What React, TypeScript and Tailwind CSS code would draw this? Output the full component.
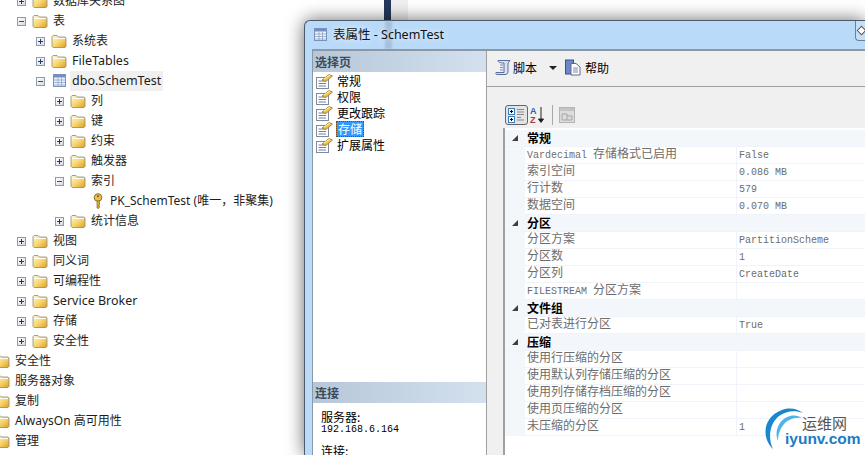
const sansFont = "font-['Noto_Sans','Noto_Sans_CJK_SC',sans-serif]"
const cjkFont = "font-['Noto_Sans_CJK_SC',sans-serif]"
const gridFont = "font-['Liberation_Mono','Noto_Sans_CJK_SC',monospace]"

const indents = ["-ml-[21px]", "ml-[17px]", "ml-[36px]", "ml-[55px]", "ml-[74px]"]

type TreeRow = { label: string; level: number; open?: boolean; icon?: "folder" | "table" | "key" }

const treeRows: TreeRow[] = [
	{ label: "数据库关系图", level: 1 },
	{ label: "表", level: 1, open: true },
	{ label: "系统表", level: 2 },
	{ label: "FileTables", level: 2 },
	{ label: "dbo.SchemTest", level: 2, open: true, icon: "table" },
	{ label: "列", level: 3 },
	{ label: "键", level: 3 },
	{ label: "约束", level: 3 },
	{ label: "触发器", level: 3 },
	{ label: "索引", level: 3, open: true },
	{ label: "PK_SchemTest (唯一，非聚集)", level: 4, icon: "key" },
	{ label: "统计信息", level: 3 },
	{ label: "视图", level: 1 },
	{ label: "同义词", level: 1 },
	{ label: "可编程性", level: 1 },
	{ label: "Service Broker", level: 1 },
	{ label: "存储", level: 1 },
	{ label: "安全性", level: 1 },
	{ label: "安全性", level: 0 },
	{ label: "服务器对象", level: 0 },
	{ label: "复制", level: 0 },
	{ label: "AlwaysOn 高可用性", level: 0 },
	{ label: "管理", level: 0 },
]

type GridRow = { label: string; value?: string; header?: boolean }

const gridRows: GridRow[] = [
	{ label: "常规", header: true },
	{ label: "Vardecimal 存储格式已启用", value: "False" },
	{ label: "索引空间", value: "0.086 MB" },
	{ label: "行计数", value: "579" },
	{ label: "数据空间", value: "0.070 MB" },
	{ label: "分区", header: true },
	{ label: "分区方案", value: "PartitionScheme" },
	{ label: "分区数", value: "1" },
	{ label: "分区列", value: "CreateDate" },
	{ label: "FILESTREAM 分区方案" },
	{ label: "文件组", header: true },
	{ label: "已对表进行分区", value: "True" },
	{ label: "压缩", header: true },
	{ label: "使用行压缩的分区" },
	{ label: "使用默认列存储压缩的分区" },
	{ label: "使用列存储存档压缩的分区" },
	{ label: "使用页压缩的分区" },
	{ label: "未压缩的分区", value: "1" },
]

const pages = ["常规", "权限", "更改跟踪", "存储", "扩展属性"]

function Folder() {
	return (
		<svg width="16" height="14" viewBox="0 0 16 14" className="shrink-0">
			<defs>
				<linearGradient id="fold" x1="0" y1="0" x2="1" y2="1">
					<stop offset="0" stopColor="#fff8d0" />
					<stop offset="0.5" stopColor="#f9d873" />
					<stop offset="1" stopColor="#dc9f24" />
				</linearGradient>
			</defs>
			<path d="M1 12.5V2.5L2 1.5H6L7.5 3H14L15 4V12.5L14 13.5H2Z" fill="url(#fold)" stroke="#8d8a78" strokeWidth="0.8" />
			<path d="M2 4.5H14" stroke="#fffdf2" />
		</svg>
	)
}

function Expander({ open }: { open?: boolean }) {
	return (
		<span className="relative block h-[9px] w-[9px] shrink-0 border border-[#8f9bab] bg-gradient-to-br from-white to-[#d5dbe5]">
			<span className={open ? "absolute left-px top-[3px] h-px w-[5px] bg-[#4a4a4a]" : "absolute left-px top-[3px] h-px w-[5px] bg-[#24367a]"} />
			{!open && <span className="absolute left-[3px] top-px h-[5px] w-px bg-[#24367a]" />}
		</span>
	)
}

function TableIcon() {
	return (
		<svg width="14" height="14" viewBox="0 0 14 14" className="shrink-0">
			<rect x="0.5" y="0.5" width="12" height="12" fill="#eef3fb" stroke="#7d90b8" />
			<rect x="1" y="1" width="11" height="2.5" fill="#6f8fc9" />
			<path d="M1 6H12M1 8.5H12M1 11H12M5 4V12M8.5 4V12" stroke="#8ba2cc" strokeWidth="0.8" />
		</svg>
	)
}

function KeyIcon() {
	return (
		<svg width="12" height="16" viewBox="0 0 12 16" className="shrink-0">
			<circle cx="6" cy="4.5" r="3.8" fill="#eac24f" stroke="#8d6d1c" />
			<circle cx="6" cy="3.2" r="1" fill="#6b5210" />
			<path d="M5 8V15L6.5 15.5L7.5 14V13H6.5V12H7.5V8Z" fill="#dcae3a" stroke="#8d6d1c" strokeWidth="0.7" />
		</svg>
	)
}

function PageIcon() {
	return (
		<svg width="17" height="15" viewBox="0 0 17 15" className="shrink-0">
			<rect x="0.5" y="3.5" width="12" height="11" fill="#fff" stroke="#7f8aa0" />
			<path d="M2.5 7H10M2.5 9.5H10M2.5 12H10" stroke="#6c7fb5" />
			<path d="M6 6L13 0.5L16.5 2L10 7.5Z" fill="#f0c24c" stroke="#8a6a20" strokeWidth="0.7" />
			<path d="M8 5L14 1" stroke="#fff2b8" />
		</svg>
	)
}

function ScrollIcon() {
	return (
		<svg width="16" height="17" viewBox="0 0 16 17">
			<path d="M3 1.5H15L13 4V12.5C13 14.5 12 15.5 10 15.5H2C1 15.5 0.5 14.5 1 13.5H9V4C7 4 3 4 3 1.5Z" fill="#d7e2f4" stroke="#5b6e9b" />
			<path d="M5 6H8M5 8.5H8M5 11H8" stroke="#7f8fb5" />
		</svg>
	)
}

function HelpIcon() {
	return (
		<svg width="16" height="17" viewBox="0 0 16 17">
			<rect x="0.5" y="1" width="8" height="14" fill="#6f86c9" stroke="#3d4f8c" />
			<path d="M6 4.5H11L15 8V16H6Z" fill="#fff" stroke="#5a6a8f" />
			<path d="M8 9H13M8 11H13M8 13H13" stroke="#7a8aa8" />
		</svg>
	)
}

function Tree() {
	return (
		<div className={`-mt-[9px] ${sansFont} text-[#1d1d1d]`}>
			{treeRows.map((row, i) => (
				<div key={i} className={`flex h-5 items-center ${indents[row.level]}`}>
					<span className="flex w-[15px] shrink-0 items-center">
						{row.level > 0 && row.level < 4 && <Expander open={row.open} />}
					</span>
					<span className="flex w-[21px] shrink-0 items-center">
						{row.icon === "table" ? (
							<span className="ml-[2px]"><TableIcon /></span>
						) : row.icon === "key" ? (
							<span className="ml-[3px]"><KeyIcon /></span>
						) : (
							<Folder />
						)}
					</span>
					<span
						className={
							row.icon === "table"
								? "-ml-[2px] flex h-5 items-center whitespace-nowrap bg-[#f0f0f0] px-[2px] text-[12.5px]"
								: /[\u4e00-\u9fff]/.test(row.label)
									? "whitespace-nowrap text-[12px]"
									: "whitespace-nowrap text-[12.5px]"
						}
					>
						{row.label}
					</span>
				</div>
			))}
		</div>
	)
}

function PropertyGrid() {
	return (
		<div className={`ml-4 flex-1 border-l-2 border-l-[#a0a0a0] bg-white pt-[2px] ${cjkFont} text-[12px]`}>
			{gridRows.map((row, i) =>
				row.header ? (
					<div key={i} className="flex h-[17px] items-center border-b border-[#f0f3f9] bg-[#f3f6fb]">
						<span className="ml-[7px] h-0 w-0 border-b-[6px] border-l-[6px] border-b-[#404040] border-l-transparent" />
						<span className="ml-[9px] font-bold text-black">{row.label}</span>
					</div>
				) : (
					<div key={i} className="flex h-[17px] items-center bg-[#f3f6fb]">
						<div className="flex h-full items-center">
							<div className="w-5" />
						</div>
						<div className={`flex h-full w-[212px] items-center whitespace-nowrap border-b border-r border-[#f0f3f9] bg-white pl-[2px] ${gridFont} text-[#6d6d6d]`}>
							{row.label.includes("Vardecimal") || row.label.includes("FILESTREAM") ? (
								<span className="text-[10px]">
									{row.label.split(" ")[0]} <span className="text-[12px]">{row.label.split(" ")[1]}</span>
								</span>
							) : (
								row.label
							)}
						</div>
						<div className={`flex h-full flex-1 items-center border-b border-[#f0f3f9] bg-white pl-[2px] ${gridFont} text-[10px] text-[#6d6d6d]`}>
							{row.value}
						</div>
					</div>
				),
			)}
		</div>
	)
}

function Dialog() {
	return (
		<div className="absolute left-[304px] top-5 flex h-[435px] w-[561px] flex-col rounded-tl-md border-l border-t border-[#4c5a6a] bg-[#b9daf9] shadow-[0_0_18px_rgba(0,0,0,0.6)]">
			{/* title bar */}
			<div className="relative flex h-7 shrink-0 items-center pl-[9px]">
				<span className="absolute left-[80px] top-0 h-full w-[7px] bg-[#8fa6c0]/50 blur-[1px]" />
				<TableIcon />
				<span className={`relative ml-[5px] ${sansFont} text-[12.5px] text-[#111] [text-shadow:0_0_6px_white]`}>表属性 - SchemTest</span>
				<span className="absolute right-0 top-0 flex h-5 w-[10px] items-center rounded-bl-sm border-b border-l border-[#6d7f92] bg-[#c5dff8] pl-[2px]">
					<span className="block h-[7px] w-[7px] rotate-45 border border-[#555] bg-white" />
				</span>
			</div>

			<div className="ml-[7px] flex min-h-0 flex-1 border-l border-t-2 border-[#8d98a5] bg-[#f0f0f0]">
				{/* left column */}
				<div className="flex w-[174px] shrink-0 flex-col border-r border-[#a0a0a0] bg-white">
					<div className={`flex h-[21px] shrink-0 items-center bg-gradient-to-r from-[#b7c7d8] to-[#d3e1ef] pl-[2px] ${cjkFont} text-[12px] font-bold text-[#3c4a5a]`}>
						选择页
					</div>
					<div className={`flex-1 pl-[3px] pt-[1px] ${cjkFont} text-[12px] text-black`}>
						{pages.map((page) => (
							<div key={page} className="flex h-4 items-center">
								<PageIcon />
								<span
									className={
										page === "存储"
											? "ml-[3px] border border-dotted border-[#7a4a10] bg-[#3399ff] px-px leading-[14px] text-white"
											: "ml-[4px]"
									}
								>
									{page}
								</span>
							</div>
						))}
					</div>
					<div className={`flex h-[21px] shrink-0 items-center bg-gradient-to-r from-[#b7c7d8] to-[#d3e1ef] pl-[2px] ${cjkFont} text-[12px] font-bold text-[#3c4a5a]`}>
						连接
					</div>
					<div className={`h-[52px] shrink-0 overflow-hidden pl-2 pt-[7px] ${cjkFont} text-[12px] leading-[13px] text-black`}>
						<div>服务器:</div>
						<div className={`${gridFont} text-[10px]`}>192.168.6.164</div>
						<div className="mt-[8px]">连接:</div>
					</div>
				</div>

				{/* right column */}
				<div className="flex min-w-0 flex-1 flex-col">
					<div className={`flex h-[36px] shrink-0 items-center border-b border-[#a0a0a0] pb-[2px] pl-2 ${cjkFont} text-[12px] text-black`}>
						<ScrollIcon />
						<span className="ml-[2px]">脚本</span>
						<span className="ml-3 h-0 w-0 border-x-[4px] border-t-[4px] border-x-transparent border-t-[#222]" />
						<span className="ml-2"><HelpIcon /></span>
						<span className="ml-1">帮助</span>
					</div>

					<div className="ml-[18px] mt-[17px] flex h-[22px] shrink-0 items-center">
						<span className="flex h-5 w-[23px] items-center justify-center rounded-[3px] border border-[#666] bg-[#e4e4e4]">
							<svg width="17" height="15" viewBox="0 0 17 15">
								<rect x="0.5" y="0.5" width="6" height="6" fill="#fff" stroke="#3f7cc4" />
								<rect x="0.5" y="8.5" width="6" height="6" fill="#fff" stroke="#3f7cc4" />
								<path d="M2 3.5H5M3.5 2V5M2 11.5H5M3.5 10V13" stroke="#000" />
								<path d="M9 1.5H16M9 4H16M9 6.5H16M9 9.5H13M9 12H16" stroke="#8a8a8a" />
							</svg>
						</span>
						<svg width="15" height="18" viewBox="0 0 15 18" className="ml-[2px]">
							<text x="0" y="8" fontSize="9" fontWeight="bold" fill="#2f5fb0" fontFamily="Liberation Sans">A</text>
							<text x="0" y="17" fontSize="9" fontWeight="bold" fill="#a83a3a" fontFamily="Liberation Sans">Z</text>
							<path d="M11 1V15M8.5 13L11 16.5L13.5 13Z" stroke="#222" fill="#222" />
						</svg>
						<span className="ml-[7px] h-5 w-px bg-[#a8a8a8]" />
						<svg width="16" height="16" viewBox="0 0 16 16" className="ml-[6px]">
							<rect x="0.5" y="0.5" width="15" height="15" fill="#dcdcdc" stroke="#b4b4b4" />
							<rect x="1" y="1" width="14" height="3" fill="#c4c4c4" />
							<path d="M3 7H8V13H3ZM8 9H13V13H8" fill="none" stroke="#a6a6a6" />
						</svg>
					</div>

					<div className="flex min-h-0 flex-1 flex-col pt-[2px]">
						<PropertyGrid />
					</div>
				</div>
			</div>
		</div>
	)
}

function Watermark() {
	return (
		<div className="absolute left-[762px] top-[407px] h-[45px] w-[100px]">
			<svg width="44" height="44" viewBox="0 0 44 44" className="absolute left-0 top-0">
				<path d="M11 42C-1 30 1 10 20 3C28 0 36 2 41 6C33 3 24 4 17 9C7 17 6 32 11 42Z" fill="#1a86cf" />
				<path d="M16 34C12 24 17 12 28 9C33 8 37 9 40 11C33 10 27 12 23 16C18 21 16 28 16 34Z" fill="#4db4e8" />
			</svg>
			<span className={`absolute left-[40px] top-2 ${cjkFont} text-[15px] leading-4 text-[#555]`}>运维网</span>
			<span className="absolute left-[23px] top-6 font-['Liberation_Sans',sans-serif] text-[15.5px] font-bold leading-4 text-[#1a7cc4]">iyunv.com</span>
		</div>
	)
}

export default function App() {
	return (
		<div className="relative flex h-[455px] w-[865px] overflow-hidden bg-white">
			<div className="w-[384px] shrink-0">
				<Tree />
			</div>
			<div className="w-[7px] shrink-0 bg-[#26395c]" />
			<div className="w-[17px] shrink-0 bg-[#f0f0f0]" />
			<div className="flex-1" />
			<Dialog />
			<Watermark />
		</div>
	)
}
